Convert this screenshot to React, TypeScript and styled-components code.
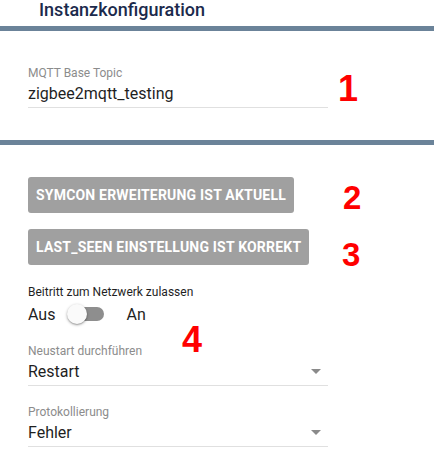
import React from "react";
import styled, { createGlobalStyle } from "styled-components";

const Global = createGlobalStyle`
  html, body { margin: 0; padding: 0; background: #ffffff; }
  body { font-family: Roboto, "Noto Sans", "Liberation Sans", sans-serif; }
  * { box-sizing: border-box; }
`;

const Page = styled.div`
  position: relative;
  width: 434px;
  height: 461px;
  overflow: hidden;
  background: #ffffff;
`;

const Header = styled.div`
  padding: 0 0 6px 39px;
  height: 26px;
  font-size: 18px;
  line-height: 20px;
  font-weight: 500;
  color: #1b2a4c;
`;

const Divider = styled.div`
  height: 5px;
  background: #6b8399;
`;

const Section = styled.div<{ $pt: number; $pb: number }>`
  display: flex;
  flex-direction: column;
  align-items: flex-start;
  padding: ${(p) => p.$pt}px 0 ${(p) => p.$pb}px 28px;
`;

const Field = styled.div<{ $mt?: number }>`
  width: 300px;
  margin-top: ${(p) => p.$mt ?? 0}px;
  display: flex;
  flex-direction: column;
`;

const Label = styled.div<{ $dark?: boolean }>`
  font-size: 12px;
  line-height: 14px;
  color: ${(p) => (p.$dark ? "#1f1f1f" : "#8c8c8c")};
`;

const ValueRow = styled.div`
  margin-top: 4px;
  padding-bottom: 4px;
  border-bottom: 1px solid #e0e0e0;
  display: flex;
  align-items: center;
  justify-content: space-between;
  font-size: 16px;
  line-height: 19px;
  color: #1f1f1f;
`;

const Caret = styled.span`
  width: 0;
  height: 0;
  margin-right: 7px;
  border-left: 5px solid transparent;
  border-right: 5px solid transparent;
  border-top: 5px solid #8a8a8a;
`;

const Button = styled.div<{ $mt?: number }>`
  margin-top: ${(p) => p.$mt ?? 0}px;
  height: 36px;
  padding: 0 8px;
  display: flex;
  align-items: center;
  background: #a0a0a0;
  border-radius: 3px;
  color: #ffffff;
  font-size: 14px;
  font-weight: 700;
  letter-spacing: 0.2px;
  text-transform: uppercase;
  white-space: nowrap;
`;

const SwitchRow = styled.div`
  margin-top: 2px;
  height: 26px;
  display: flex;
  align-items: center;
  font-size: 16px;
  line-height: 19px;
  color: #1f1f1f;
`;

const Switch = styled.div`
  position: relative;
  width: 37px;
  height: 20px;
  margin: 0 22px 0 12px;
  display: flex;
  align-items: center;
`;

const Track = styled.div`
  margin-left: 3px;
  width: 34px;
  height: 14px;
  border-radius: 7px;
  background: #8e8e8e;
`;

const Thumb = styled.div`
  position: absolute;
  left: 0;
  top: 0;
  width: 20px;
  height: 20px;
  border-radius: 50%;
  background: #fafafa;
  box-shadow: 0 1px 3px rgba(0, 0, 0, 0.35), 0 1px 1px rgba(0, 0, 0, 0.14);
`;

const Marker = styled.div<{ $top: number; $left: number; $size: number }>`
  position: absolute;
  top: ${(p) => p.$top}px;
  left: ${(p) => p.$left}px;
  font-family: "Liberation Sans", Arial, sans-serif;
  font-weight: 700;
  font-size: ${(p) => p.$size}px;
  line-height: 1;
  color: #ff0000;
`;

export default function App() {
  return (
    <Page>
      <Global />
      <Header>Instanzkonfiguration</Header>
      <Divider />
      <Section $pt={35} $pb={32}>
        <Field>
          <Label>MQTT Base Topic</Label>
          <ValueRow>zigbee2mqtt_testing</ValueRow>
        </Field>
      </Section>
      <Divider />
      <Section $pt={32} $pb={0}>
        <Button>Symcon Erweiterung ist aktuell</Button>
        <Button $mt={16}>last_seen Einstellung ist korrekt</Button>
        <Field $mt={20}>
          <Label $dark>Beitritt zum Netzwerk zulassen</Label>
        </Field>
        <SwitchRow>
          <span>Aus</span>
          <Switch>
            <Track />
            <Thumb />
          </Switch>
          <span>An</span>
        </SwitchRow>
        <Field $mt={17}>
          <Label>Neustart durchführen</Label>
          <ValueRow>
            <span>Restart</span>
            <Caret />
          </ValueRow>
        </Field>
        <Field $mt={19}>
          <Label>Protokollierung</Label>
          <ValueRow>
            <span>Fehler</span>
            <Caret />
          </ValueRow>
        </Field>
      </Section>
      <Marker $top={71} $left={338} $size={36}>1</Marker>
      <Marker $top={181} $left={343} $size={33}>2</Marker>
      <Marker $top={238} $left={342} $size={33}>3</Marker>
      <Marker $top={322} $left={182} $size={36}>4</Marker>
    </Page>
  );
}
